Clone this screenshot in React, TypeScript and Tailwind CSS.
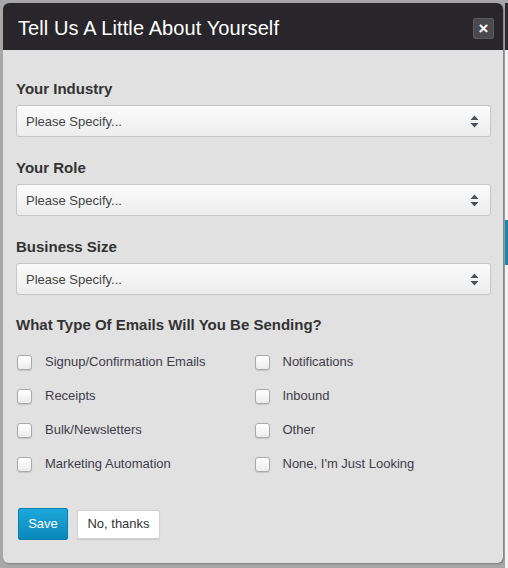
import React from 'react';

const leftOptions = ['Signup/Confirmation Emails', 'Receipts', 'Bulk/Newsletters', 'Marketing Automation'];
const rightOptions = ['Notifications', 'Inbound', 'Other', "None, I'm Just Looking"];

function SelectBox() {
  return (
    <div className="h-[32px] w-full rounded-[3px] border border-[#c6c6c6] bg-gradient-to-b from-[#fbfbfb] to-[#ededed] flex items-center justify-between pl-[9px] pr-[11px] text-[13px] text-[#444]">
      <span className="pt-[1px]">Please Specify...</span>
      <svg width="9" height="13" viewBox="0 0 9 13" className="text-[#4b5059]">
        <path d="M4.5 0.5 L8.5 5 L0.5 5 Z" fill="currentColor" />
        <path d="M4.5 12.5 L8.5 8 L0.5 8 Z" fill="currentColor" />
      </svg>
    </div>
  );
}

function Field({ label }: { label: string }) {
  return (
    <div className="mb-[21px]">
      <div className="h-[20px] leading-[20px] text-[15px] font-bold text-[#333] mb-[6px]">{label}</div>
      <SelectBox />
    </div>
  );
}

function CheckRow({ label }: { label: string }) {
  return (
    <div className="h-[34px] flex items-center pl-[1px]">
      <span className="w-[15px] h-[15px] rounded-[3px] border border-[#a9a9a9] bg-gradient-to-b from-white to-[#ececec] shadow-[0_1px_1px_rgba(0,0,0,0.12)]" />
      <span className="ml-[13px] text-[13px] text-[#3f3d4a]">{label}</span>
    </div>
  );
}

export default function App() {
  return (
    <div
      className="w-[508px] h-[568px] bg-[#a7a7a7] flex overflow-hidden"
      style={{ fontFamily: '"Liberation Sans", Arial, sans-serif' }}
    >
      <div className="pt-[3px] pl-[3px]">
        <div className="w-[500px] h-[560px] rounded-[6px] bg-[#e1e1e1] overflow-hidden flex flex-col shadow-[1px_1px_2px_rgba(0,0,0,0.25)]">
          {/* Header */}
          <div className="h-[47px] bg-[#28262a] flex items-center justify-between pl-[15px] pr-[9px] shrink-0">
            <h1 className="text-[20px] tracking-[0.1px] text-white pt-[2px]">Tell Us A Little About Yourself</h1>
            <button className="w-[21px] h-[21px] mt-[3px] rounded-[2px] bg-[#4a494c] border border-[#5a595c] text-white text-[17px] font-bold leading-none flex items-center justify-center">
              ×
            </button>
          </div>

          {/* Body */}
          <div className="pt-[29px] pl-[13px] pr-[12px]">
            <Field label="Your Industry" />
            <Field label="Your Role" />
            <Field label="Business Size" />

            <div className="h-[20px] leading-[20px] text-[15px] font-bold text-[#333] -mt-[1px]">
              What Type Of Emails Will You Be Sending?
            </div>
            <div className="grid grid-cols-2 mt-[10px]">
              <div>
                {leftOptions.map((o) => (
                  <CheckRow key={o} label={o} />
                ))}
              </div>
              <div>
                {rightOptions.map((o) => (
                  <CheckRow key={o} label={o} />
                ))}
              </div>
            </div>

            <div className="mt-[27px] flex items-center gap-[9px] pl-[2px]">
              <button className="h-[32px] w-[50px] rounded-[2px] border border-[#0b7fab] bg-gradient-to-b from-[#1ca9db] to-[#0a88ba] text-white text-[13px]">
                Save
              </button>
              <button className="h-[29px] w-[83px] rounded-[2px] border border-[#d0d0d0] bg-white text-[#333] text-[13px] shadow-[0_1px_1px_rgba(0,0,0,0.1)]">
                No, thanks
              </button>
            </div>
          </div>
        </div>
      </div>
      {/* Page behind the modal */}
      <div className="flex-1 mt-[3px] ml-[2px] bg-[#f2f2f2] flex flex-col">
        <div className="h-[47px] bg-[#2a2a2e]" />
        <div className="h-[170px]" />
        <div className="h-[45px] bg-[#1a86ad]" />
      </div>
    </div>
  );
}
